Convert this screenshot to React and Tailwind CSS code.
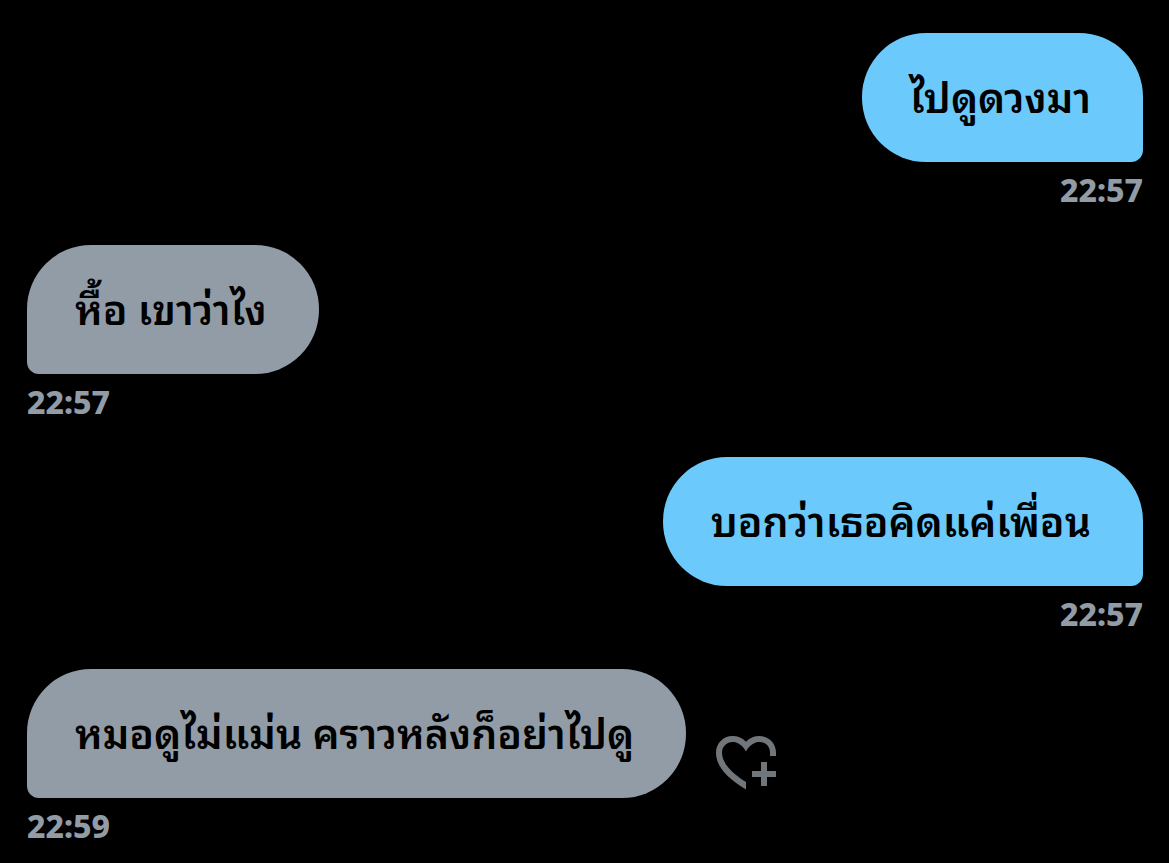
const messages = [
  { id: 1, text: 'ไปดูดวงมา', time: '22:57', mine: true },
  { id: 2, text: 'หื้อ เขาว่าไง', time: '22:57', mine: false },
  { id: 3, text: 'บอกว่าเธอคิดแค่เพื่อน', time: '22:57', mine: true },
  { id: 4, text: 'หมอดูไม่แม่น คราวหลังก็อย่าไปดู', time: '22:59', mine: false, canReact: true },
];

const HeartPlusIcon = () => (
  <svg viewBox="0 0 60 54" className="h-[54px] w-[60px]" fill="currentColor" aria-hidden="true">
    <path d="M30 5.700C26.500 2 22 0 16.500 0C7 0 0 7.500 0 16.500C0 29 9 41 30 53.500V46C13 35.500 6 25.500 6 16.500C6 10.500 11 6 16.500 6C21.500 6 26 8.500 30 15.500C34 8.500 38.500 6 43.500 6C49.500 6 54 10.500 54 16.500V20H60V16.500C60 7.500 53 0 43.500 0C38 0 33.500 2 30 5.700Z" />
    <path d="M45 26H51V35H60V41H51V50H45V41H36V35H45Z" />
  </svg>
);

const Message = ({ message }) => {
  const { text, time, mine, canReact } = message;

  return (
    <li className={mine ? 'flex flex-col items-end' : 'flex flex-col items-start'}>
      <div className="flex items-end gap-[30px]">
        <p
          className={
            mine
              ? 'rounded-[64px] rounded-br-[12px] bg-[#6bc9fb] pt-[33px] pr-[52px] pb-[31px] pl-12 text-[41px] leading-[65px] font-semibold text-black'
              : 'rounded-[64px] rounded-bl-[12px] bg-[#929ca6] pt-[33px] pr-[52px] pb-[31px] pl-12 text-[41px] leading-[65px] font-semibold text-black'
          }
        >
          {text}
        </p>
        {canReact && (
          <button type="button" aria-label="Add reaction" className="mb-2 text-[#71767b]">
            <HeartPlusIcon />
          </button>
        )}
      </div>
      <time className="mt-2 font-['Noto_Sans',sans-serif] text-[32px] leading-10 font-extrabold text-[#929ca6]">{time}</time>
    </li>
  );
};

export default function App() {
  return (
    <main className="min-h-screen bg-black pt-[33px] pr-[26px] pl-[27px] font-['Inter','Noto_Sans_Thai_Looped','Noto_Sans_Thai','Noto_Sans',sans-serif]">
      <ul className="flex flex-col gap-[35px]">
        {messages.map((message) => (
          <Message key={message.id} message={message} />
        ))}
      </ul>
    </main>
  );
}
